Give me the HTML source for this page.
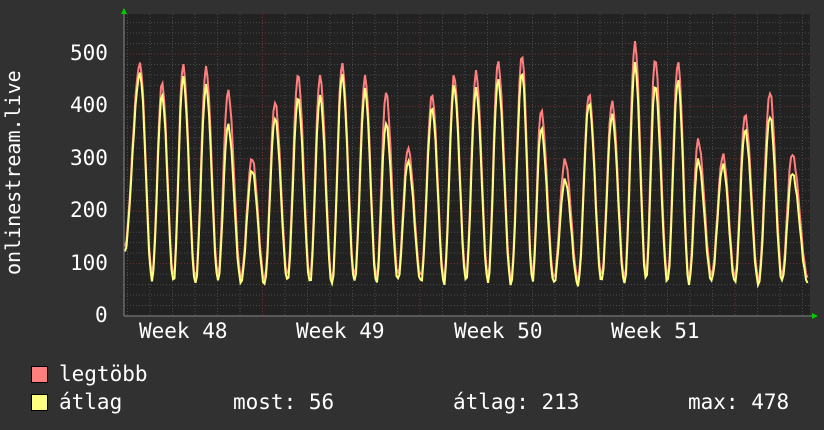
<!DOCTYPE html>
<html><head><meta charset="utf-8"><style>
html,body{margin:0;padding:0;background:#313131;}
body{width:824px;height:430px;overflow:hidden;position:relative;font-family:"DejaVu Sans Mono","Liberation Mono",monospace;color:#fff;}
.t{position:absolute;font-size:21px;line-height:1;white-space:pre;}
.sq{position:absolute;width:15px;height:15px;border:1px solid #000;}
</style></head><body>
<svg id="g" width="824" height="430" style="position:absolute;left:0;top:0"></svg>
<div class="t" style="left:70px;top:43px">500</div>
<div class="t" style="left:70px;top:95px">400</div>
<div class="t" style="left:70px;top:148px">300</div>
<div class="t" style="left:70px;top:200px">200</div>
<div class="t" style="left:70px;top:253px">100</div>
<div class="t" style="left:95px;top:305px">0</div>
<div class="t" style="left:139px;top:321px">Week 48</div>
<div class="t" style="left:296px;top:321px">Week 49</div>
<div class="t" style="left:454px;top:321px">Week 50</div>
<div class="t" style="left:611px;top:321px">Week 51</div>
<div class="t" style="transform:rotate(-90deg);transform-origin:0 0;font-size:20px;top:275px;left:3px">onlinestream.live</div>
<div class="sq" style="left:31px;top:366px;background:#ff7f7f"></div>
<div class="sq" style="left:31px;top:394px;background:#ffff80"></div>
<div class="t" style="left:59px;top:364px">legtöbb</div>
<div class="t" style="left:59px;top:392px">átlag</div>
<div class="t" style="left:233px;top:392px">most: 56</div>
<div class="t" style="left:453px;top:392px">átlag: 213</div>
<div class="t" style="left:688px;top:392px">max: 478</div>
<script>
var s='';
var L=124,R=810,T=14,B=316;
s+='<rect x="'+L+'" y="'+T+'" width="'+(R-L)+'" height="'+(B-T)+'" fill="#222"/>';
for(var v=20;v<=560;v+=20){var y=B-v*0.524;if(y<T)break;var maj=(v%100==0);
s+='<line x1="'+L+'" x2="'+R+'" y1="'+y.toFixed(1)+'" y2="'+y.toFixed(1)+'" stroke="'+(maj?'#7a3030':'#4a4a4a')+'" stroke-dasharray="1,2"/>';}
for(var i=0;i<31;i++){var x=127.5+i*22.5;if(x>R)break;var maj=((i-6)%7==0)&&i>=6;
s+='<line x1="'+x+'" x2="'+x+'" y1="'+T+'" y2="'+B+'" stroke="'+(maj?'#7a3030':'#4a4a4a')+'" stroke-dasharray="1,2"/>';}
var P=[[140,64,74],[162,83,95],[183,65,77],[206,68,86],[228,91,125],[252,158,170],[275,102,118],[298,75,98],[320,76,96],[342,64,75],[365,77,90],[386,92,123],[408,148,161],[432,95,108],[454,76,86],[476,72,89],[498,62,80],[522,55,72],[541,110,128],[565,160,180],[589,94,103],[612,102,115],[635,43,64],[655,59,85],[678,62,80],[698,140,160],[723,155,165],[745,115,130],[770,92,116],[792,154,173]];
var K=[[124,250,255]];
for(var i=0;i<P.length;i++){K.push(P[i]);var nx=i<P.length-1?(P[i][0]+P[i+1][0])/2+1:808;var r=((i*37)%11);K.push([nx,274+r*0.6,280+r*0.5]);}
function val(x,c){for(var i=0;i<K.length-1;i++){if(x>=K[i][0]&&x<=K[i+1][0]){var t=(x-K[i][0])/(K[i+1][0]-K[i][0]);var a=K[i][c],b=K[i+1][c];
var e=(1-Math.cos(Math.PI*t))/2;
return a+(b-a)*e+Math.sin(x*1.7)*2;}}return 283;}
function path(c){var d='';for(var x=125;x<=808;x+=1.5){var y=Math.min(B-2,val(x,c));d+=(d?'L':'M')+x.toFixed(1)+','+y.toFixed(1);}return d;}
s+='<path d="'+path(1)+'" fill="none" stroke="#ff7f7f" stroke-width="2"/>';
s+='<path d="'+path(2)+'" fill="none" stroke="#ffff80" stroke-width="2"/>';
s+='<line x1="'+L+'" x2="'+(R+3)+'" y1="'+B+'" y2="'+B+'" stroke="#888"/>';
s+='<line x1="'+L+'" x2="'+L+'" y1="'+(T-3)+'" y2="'+B+'" stroke="#888"/>';
s+='<polygon points="121,14 127,14 124,8" fill="#00cc00"/>';
s+='<polygon points="812,313 812,319 818,316" fill="#00cc00"/>';
document.getElementById('g').innerHTML=s;
</script>
</body></html>
